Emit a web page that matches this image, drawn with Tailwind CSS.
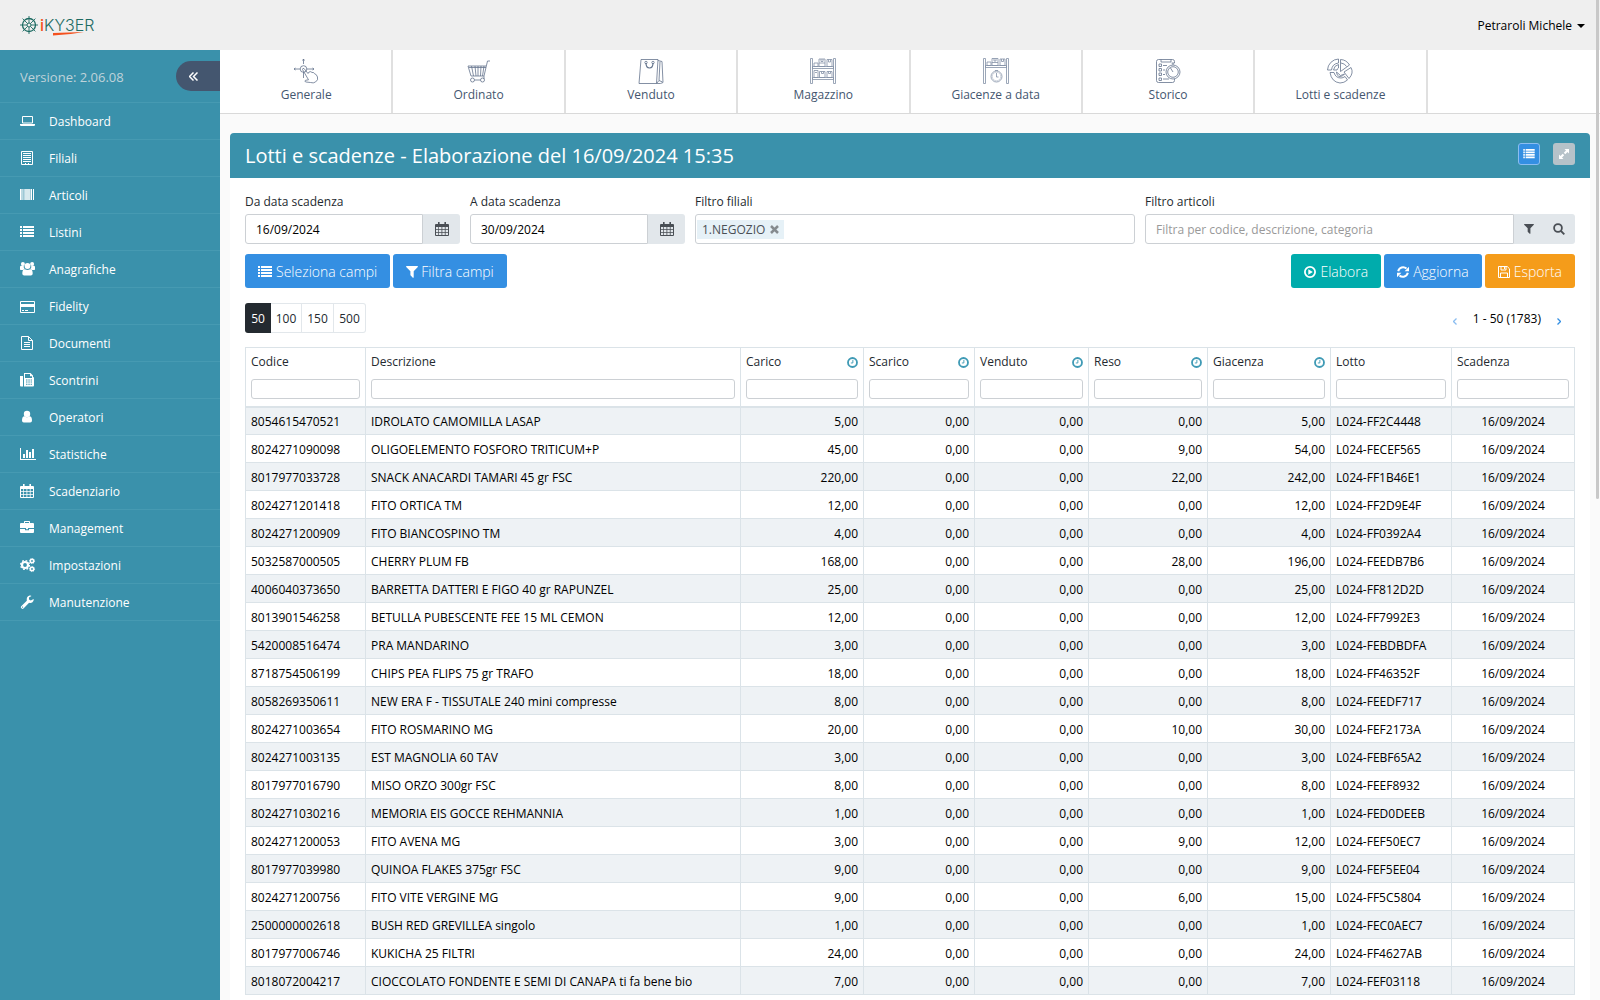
<!DOCTYPE html>
<html lang="it">
<head>
<meta charset="utf-8">
<meta name="viewport" content="width=device-width, initial-scale=1">
<title>Lotti e scadenze</title>
<script src="https://cdn.jsdelivr.net/npm/@tailwindcss/browser@4"></script>
</head>
<body class="font-['Open_Sans','Noto_Sans',sans-serif] text-xs text-black bg-[#fafafa]">

<svg class="hidden" aria-hidden="true">
  <symbol id="i-list" viewBox="0 0 14 12"><path fill="currentColor" d="M0 0h2v2H0zM3 0h11v2H3zM0 3h2v2H0zM3 3h11v2H3zM0 6h2v2H0zM3 6h11v2H3zM0 9h2v2H0zM3 9h11v2H3z"/></symbol>
  <symbol id="i-filter" viewBox="0 0 12 12"><path fill="currentColor" d="M.6 0h10.8c.5 0 .7.6.4.9L7.700 5.200v6.100c0 .5-.5.7-.9.4L4.700 9.600a.8.8 0 0 1-.3-.5V5.200L.2.9C-.1.6.1 0 .6 0z"/></symbol>
  <symbol id="i-calendar" viewBox="0 0 14 14"><path fill="currentColor" fill-rule="evenodd" d="M3 0h1.600v2h4.800V0H11v2h2a1 1 0 0 1 1 1v10a1 1 0 0 1-1 1H1a1 1 0 0 1-1-1V3a1 1 0 0 1 1-1h2zM1 5v2h2.300V5zm3 0v2h2.500V5zm3.300 0v2h2.500V5zm3.300 0v2H13V5zM1 7.700v2.200h2.300V7.700zm3 0v2.200h2.500V7.700zm3.300 0v2.200h2.500V7.700zm3.300 0v2.200H13V7.700zM1 10.700V13h2.300v-2.300zm3 0V13h2.500v-2.300zm3.300 0V13h2.500v-2.300zm3.300 0V13H13v-2.300z"/></symbol>
  <symbol id="i-clock" viewBox="0 0 12 12"><circle cx="6" cy="6" r="4.900" fill="none" stroke="currentColor" stroke-width="2"/><path d="M6.400 3.200v3.300H4.200" fill="none" stroke="currentColor"/></symbol>
</svg>

<div class="relative flex h-screen flex-col overflow-hidden">
  <header class="flex h-[50px] shrink-0 items-center justify-between bg-[#efefef] pr-[15px] pl-5">
    <a href="#" aria-label="iKyber" class="relative flex items-center gap-0.5 text-[#1d6b62]">
      <svg class="size-[18px]" viewBox="0 0 18 18" fill="none" stroke="currentColor"><circle cx="9" cy="9" r="6.500" stroke-width="1.300"/><circle cx="9" cy="9" r="2" stroke-width="1"/><path stroke-width=".9" d="M9 0v7M9 11v7M0 9h7M11 9h7M2.600 2.600l5 5M10.400 10.400l5 5M15.400 2.600l-5 5M7.600 10.400l-5 5"/></svg>
      <span class="font-['Inter',sans-serif] text-base leading-5 font-light"><span class="font-medium text-[#f4511e]">i</span>KY3ER</span>
      <svg class="absolute top-[17px] left-8 h-1 w-8" viewBox="0 0 32 4" preserveAspectRatio="none"><path d="M1 1L32 0Q16 3 1 3.500z" fill="#f4511e"/></svg>
    </a>
    <button class="flex items-center gap-[5px] pt-px">Petraroli Michele
      <svg class="h-1 w-2" viewBox="0 0 8 4"><path d="M0 0h8L4 4z"/></svg>
    </button>
  </header>

  <div class="flex min-h-0 flex-1">
    <aside class="w-[220px] shrink-0 bg-[#3a91ab] text-white">
      <div class="flex h-[53px] items-center justify-between border-b border-[#469ab2] pl-5">
        <span class="pt-[3px] text-[13px] text-[#bfd3da]">Versione: 2.06.08</span>
        <button aria-label="Comprimi menu" class="flex h-[30px] w-11 items-center rounded-l-full bg-[#44566f] pl-[13px]">
          <svg class="size-[9px]" viewBox="0 0 9 9" fill="none" stroke="currentColor" stroke-width="1.500"><path d="M4.500.5l-4 4 4 4M8.500.5l-4 4 4 4"/></svg>
        </button>
      </div>
      <nav>
        <a href="#" class="flex h-[37px] items-center gap-[13px] border-b border-[#469ab2] pt-px pl-5"><svg class="size-4" viewBox="0 0 16 16"><path fill="none" stroke="currentColor" d="M2.500 2.500h10v6.500h-10z"/><path fill="currentColor" d="M0 10h15v1.200l-.8.8H.8l-.8-.8z"/></svg>Dashboard</a>
        <a href="#" class="flex h-[37px] items-center gap-[13px] border-b border-[#469ab2] pt-px pl-5"><svg class="size-4" viewBox="0 0 16 16" fill="none" stroke="currentColor"><path d="M1.500.500h11v13h-11z"/><path d="M3 2.500h8M3 4.500h8M3 6.500h8M3 8.500h8M3 10.500h8"/><path d="M5 12.500h1M8 12.500h1"/></svg>Filiali</a>
        <a href="#" class="flex h-[37px] items-center gap-[13px] border-b border-[#469ab2] pt-px pl-5"><svg class="size-4" viewBox="0 0 16 16" fill="currentColor"><path opacity=".65" d="M0 1h3v11H0zM4 1h1v11H4z"/><path opacity=".8" d="M5 1h5v11H5z"/><path opacity=".5" d="M3 1h1v11H3zM10 1h1v11h-1z"/><path d="M0 1h1v11H0zM11 1h1v11h-1zM13 1h1v11h-1z"/></svg>Articoli</a>
        <a href="#" class="flex h-[37px] items-center gap-[13px] border-b border-[#469ab2] pt-px pl-5"><svg class="size-4" viewBox="0 0 16 16"><use href="#i-list" x="0" y="1" width="14" height="12"/></svg>Listini</a>
        <a href="#" class="flex h-[37px] items-center gap-[13px] border-b border-[#469ab2] pt-px pl-5"><svg class="size-4" viewBox="0 1 16 16" fill="currentColor"><circle cx="2.900" cy="3" r="2"/><circle cx="12.100" cy="3" r="2"/><circle cx="7.500" cy="5" r="2.900"/><path d="M0 8.500V6q0-1.300 1.300-1.300h2.500q-.5 2 .8 3.300-1 .1-1.600.9H.6zM15 8.500V6q0-1.300-1.300-1.300h-2.500q.5 2-.8 3.300 1 .1 1.600.9h2.400zM2.300 12.500q0-4.300 2.500-4.300 2.700 1.600 5.400 0 2.500 0 2.500 4.300 0 2-1.900 2H4.200q-1.900 0-1.900-2z"/></svg>Anagrafiche</a>
        <a href="#" class="flex h-[37px] items-center gap-[13px] border-b border-[#469ab2] pt-px pl-5"><svg class="size-4" viewBox="0 0 16 16"><path fill="none" stroke="currentColor" d="M.5 2.500h14v11H.5z"/><path fill="currentColor" d="M0 5h15v3H0zM2 11h2v1H2zM5 11h3v1H5z"/></svg>Fidelity</a>
        <a href="#" class="flex h-[37px] items-center gap-[13px] border-b border-[#469ab2] pt-px pl-5"><svg class="size-4" viewBox="0 0 16 16" fill="none" stroke="currentColor"><path d="M1.500.500h7l4 4v9h-11zM8.500.500v4h4M4 6.500h6M4 8.500h6M4 10.500h6"/></svg>Documenti</a>
        <a href="#" class="flex h-[37px] items-center gap-[13px] border-b border-[#469ab2] pt-px pl-5"><svg class="size-4" viewBox="0 1 16 16" fill="currentColor"><path d="M0 4h3v10.500H1a1 1 0 0 1-1-1z"/><path fill-rule="evenodd" d="M4 1h6.500L13 3.500V5q1 0 1 1v7.500q0 1-1 1H4zM5 2v4h7V4.200h-2V2zM6 7.500v1h1.500v-1zm2.300 0v1h1.500v-1zm2.300 0v1H12v-1zM6 9.600v1h1.500v-1zm2.300 0v1h1.500v-1zm2.300 0v1H12v-1zM6 11.700v1h1.500v-1zm2.300 0v1h1.500v-1zm2.300 0v1H12v-1z"/></svg>Scontrini</a>
        <a href="#" class="flex h-[37px] items-center gap-[13px] border-b border-[#469ab2] pt-px pl-5"><svg class="size-4" viewBox="0 0 16 16" fill="currentColor"><circle cx="7" cy="4" r="3.200"/><path d="M2 10.500q0-4.300 2.600-4.300 2.400 2 4.800 0 2.600 0 2.600 4.300 0 2-1.800 2H3.800q-1.800 0-1.800-2z"/></svg>Operatori</a>
        <a href="#" class="flex h-[37px] items-center gap-[13px] border-b border-[#469ab2] pt-px pl-5"><svg class="size-4" viewBox="0 0 16 16" fill="currentColor"><path d="M0 1h1v11h15v1H0zM3 7h2v4H3zM6 3h2v8H6zM9 5h2v6H9zM12 2h2v9h-2z"/></svg>Statistiche</a>
        <a href="#" class="flex h-[37px] items-center gap-[13px] border-b border-[#469ab2] pt-px pl-5"><svg class="size-4" viewBox="0 0 16 16"><use href="#i-calendar" width="14" height="14"/></svg>Scadenziario</a>
        <a href="#" class="flex h-[37px] items-center gap-[13px] border-b border-[#469ab2] pt-px pl-5"><svg class="size-4" viewBox="0 1 16 16" fill="currentColor"><path fill-rule="evenodd" d="M4 3V1.700q0-.7.700-.7h4.600q.7 0 .7.700V3h3q1 0 1 1v4H0V4q0-1 1-1zm1 0h4V2H5z"/><path d="M0 9h5v1.300h4V9h5v3q0 1-1 1H1q-1 0-1-1zM6 8h2v1.300H6z"/></svg>Management</a>
        <a href="#" class="flex h-[37px] items-center gap-[13px] border-b border-[#469ab2] pt-px pl-5"><svg class="size-4" viewBox="0 1 16 16" fill="none" stroke="currentColor"><circle cx="5" cy="8" r="3" stroke-width="2.200"/><circle cx="5" cy="8" r="4.500" stroke-width="1.200" stroke-dasharray="1.770 1.770"/><circle cx="12" cy="4" r="1.700" stroke-width="1.600"/><circle cx="12" cy="4" r="2.600" stroke-width=".8" stroke-dasharray="1.020 1.020"/><circle cx="12" cy="12" r="1.700" stroke-width="1.600"/><circle cx="12" cy="12" r="2.600" stroke-width=".8" stroke-dasharray="1.020 1.020"/></svg>Impostazioni</a>
        <a href="#" class="flex h-[37px] items-center gap-[13px] border-b border-[#469ab2] pt-px pl-5"><svg class="size-4" viewBox="0 1 16 16" fill="currentColor"><path fill-rule="evenodd" d="M6.800 6.800L1.200 12.300q-.9.900 0 1.700l.5.500q.9.800 1.800-.1l5.600-5.600q2.900.9 4.300-1.800.5-1.200.2-1.900L10.800 6.600 9 5.600v-2L11.500 2q-.3-.7-2-.4-3.300 1-2.700 5.200zM2.600 12.500a.6.600 0 1 1-.1 1.200.6.600 0 0 1 .1-1.200z"/></svg>Manutenzione</a>
      </nav>
    </aside>

    <main class="min-w-0 flex-1">
      <nav class="flex h-16 border-b border-[#d9d9d9] bg-white pl-px text-[#44566f]">
        <a href="#" class="flex w-1/8 flex-col items-center gap-[3px] border-r-2 border-[#e0e0e0] pt-2"><svg class="size-[26px] text-[#64748d]" viewBox="0 0 26 26" fill="none" stroke="currentColor" stroke-width=".8"><path d="M10.500 1v5M10.500 14v6M1 11h6M14 11h7M9.500 2.500l1-1.500 1 1.500M2.500 10L1 11l1.500 1M19.500 10l1.500 1-1.500 1"/><circle cx="10.500" cy="11" r="3.300"/><path d="M9.500 11.500q0-1.500 1.500-1l4 5 1-1.500q2-1 3 .5 2-.5 2.500 1.200 2 .3 3 3.300 1 3-2 5-2 1.500-5 .5l-4.500-.5q-2-.5-.5-1.700l3-.5z"/></svg><span>Generale</span></a>
        <a href="#" class="flex w-1/8 flex-col items-center gap-[3px] border-r-2 border-[#e0e0e0] pt-2"><svg class="size-[26px] text-[#64748d]" viewBox="0 0 26 26" fill="none" stroke="currentColor" stroke-width=".8"><path d="M24 3h-2.500l-3.500 15H5l-3-10h18M3 9.500h17M5.500 8l2 10M9 8l1 10M12 8v10M15 8l-.5 10M18 8l-1.500 10M8.500 22h6M18 18v3"/><circle cx="6.500" cy="22" r="2"/><circle cx="16.500" cy="22" r="2"/></svg><span>Ordinato</span></a>
        <a href="#" class="flex w-1/8 flex-col items-center gap-[3px] border-r-2 border-[#e0e0e0] pt-2"><svg class="size-[26px] text-[#64748d]" viewBox="0 0 26 26" fill="none" stroke="currentColor" stroke-width=".8"><path d="M3 1.500h17l-1.500 24H1zM20 2.500l4 1 1 21-2.500 1h-4M22 3.500l-1 19-2.500 3M21 22.500l3.500 1.500"/><circle cx="8" cy="4.500" r="1.200"/><circle cx="15" cy="4.500" r="1.200"/><path d="M8 5q0 5 3.500 5T15 5" stroke-width="1.200"/></svg><span>Venduto</span></a>
        <a href="#" class="flex w-1/8 flex-col items-center gap-[3px] border-r-2 border-[#e0e0e0] pt-2"><svg class="size-[26px] text-[#8391a6]" viewBox="0 0 26 26" fill="none" stroke="currentColor" stroke-width=".8"><path d="M.5.500h2v25h-2zM23.500.500h2v25h-2zM2.500 8.500h21v2h-21zM2.500 19.500h21v2h-21zM4 5h4v3.500H4zM9 1h6v7.500H9zM11 1v2.500h2V1M17 1.500h5v7h-5zM18.500 1.500V4h2V1.500M4 12.500h4v7H4zM9.500 13.500h5.500v6H9.500zM11.500 13.500v2h2v-2M17 13.500h5v6h-5zM18.500 13.500v2h2v-2M5 14.500h2M9 5h6"/></svg><span>Magazzino</span></a>
        <a href="#" class="flex w-1/8 flex-col items-center gap-[3px] border-r-2 border-[#e0e0e0] pt-2"><svg class="size-[26px] text-[#8391a6]" viewBox="0 0 26 26" fill="none" stroke="currentColor" stroke-width=".8"><path d="M.5.500h2v25h-2zM23.500.500h2v25h-2zM2.500 7.500h21v2h-21zM4 4h4v3.500H4zM9 .500h6v7H9zM11 .500V3h2V.500M17 1h5v6.500h-5zM18.500 1v2.500h2V1M9 4.500h6M13.500 15v4h2M12 12.500h3"/><circle cx="13.500" cy="18.500" r="5.500"/><circle cx="13.500" cy="18.500" r="4.300" stroke-width=".4"/></svg><span>Giacenze a data</span></a>
        <a href="#" class="flex w-1/8 flex-col items-center gap-[3px] border-r-2 border-[#e0e0e0] pt-2"><svg class="size-[26px] text-[#64748d]" viewBox="0 0 26 26" fill="none" stroke="currentColor" stroke-width=".8"><path d="M19.500 5V3.500q0-2-2-2h-14q-2 0-2 2v19q0 2 2 2h14q2 0 2-2V21M6 1.500V4h10V1.500M4 6h2.500v2.500H4zM4 10.500h2.500V13H4zM4 15h2.500v2.500H4zM4 20h2.500v2.500H4zM8 7.500h4M8 12h2M8 16.500h2M8 21h6M18 7V5M16.500 5h3M18 14l-2.500-4"/><circle cx="18" cy="14" r="7"/><circle cx="18" cy="14" r="5.300"/></svg><span>Storico</span></a>
        <a href="#" class="flex w-1/8 flex-col items-center gap-[3px] border-r-2 border-[#e0e0e0] pt-2"><svg class="size-[26px] text-[#64748d]" viewBox="0 0 26 26" fill="none" stroke="currentColor" stroke-width=".8"><path d="M11.500 1A11.500 11.500 0 0 0 .5 12h4a8 8 0 0 1 7-7zM13.500 1.500v12l9-6.500a11 11 0 0 0-9-5.500zM11.500 6.500a6.500 6.500 0 0 0-5 5.500h3.500q.3-1.500 1.500-2zM24 9.500l-7 4.500 5 6.500q5-5.500 2-11zM3 14.500h4q1.500 5.500 7 5.500 2 0 4-1.500l2.500 3.500Q17 25 13 25 4.500 24 3 14.500zM9.500 14l4 3.500 4-1.500q-1.500 2.500-4.500 2.500T9.500 14zM14 5q4 .5 5.500 3.500"/></svg><span>Lotti e scadenze</span></a>
      </nav>

      <section class="mx-2.5 mt-[19px] bg-white">
        <header class="flex h-[45px] items-center justify-between rounded-t bg-[#3a91ab] px-[15px] text-white">
          <h1 class="text-xl">Lotti e scadenze - Elaborazione del 16/09/2024 15:35</h1>
          <div class="flex gap-[13px] pb-[3px]">
            <button aria-label="Elenco" class="grid size-[22px] place-items-center rounded-[3px] border border-[#8bbdf0] bg-[#348fe2]"><svg class="h-2.5 w-3" viewBox="0 0 14 12"><use href="#i-list" width="14" height="12"/></svg></button>
            <button aria-label="Espandi" class="grid size-[22px] place-items-center rounded-[3px] bg-[#b6c2c9]"><svg class="size-2.5" viewBox="0 0 10 10" fill="currentColor"><path d="M5.500 0H10v4.500L8.500 3 6.300 5.200 4.800 3.700 7 1.500zM0 5.500L1.500 7l2.200-2.200 1.500 1.500L3 8.500 4.500 10H0z"/></svg></button>
          </div>
        </header>

        <div class="px-[15px] pt-[15px] pb-5">
          <form class="grid grid-cols-[215fr_215fr_440fr_430fr] gap-2.5 text-[#242a30]">
            <div>
              <label for="da" class="block h-[21px] leading-[18px]">Da data scadenza</label>
              <div class="flex h-[30px]">
                <input id="da" value="16/09/2024" class="min-w-0 flex-1 rounded-l-[3px] border border-[#ccd0d4] px-2.5 pt-0.5 text-black">
                <button type="button" aria-label="Apri calendario" class="grid w-[37px] place-items-center rounded-r-[3px] bg-[#e2e7eb] text-[#4a4f55]"><svg class="size-3.5"><use href="#i-calendar" width="14" height="14"/></svg></button>
              </div>
            </div>
            <div>
              <label for="a" class="block h-[21px] leading-[18px]">A data scadenza</label>
              <div class="flex h-[30px]">
                <input id="a" value="30/09/2024" class="min-w-0 flex-1 rounded-l-[3px] border border-[#ccd0d4] px-2.5 pt-0.5 text-black">
                <button type="button" aria-label="Apri calendario" class="grid w-[37px] place-items-center rounded-r-[3px] bg-[#e2e7eb] text-[#4a4f55]"><svg class="size-3.5"><use href="#i-calendar" width="14" height="14"/></svg></button>
              </div>
            </div>
            <div>
              <label for="filiali" class="block h-[21px] leading-[18px]">Filtro filiali</label>
              <div class="flex h-[30px] items-center rounded-[3px] border border-[#ccd0d4] pt-px pl-px">
                <span class="flex h-[19px] items-center gap-[5px] bg-[#e6f1f7] px-[5px] text-[#4a4f55]">1.NEGOZIO
                  <button type="button" aria-label="Rimuovi 1.NEGOZIO"><svg class="size-[9px]" viewBox="0 0 9 9" stroke="#868b8f" stroke-width="2.500"><path d="M1 1l7 7M8 1L1 8"/></svg></button>
                </span>
                <input id="filiali" class="min-w-0 flex-1 outline-none">
              </div>
            </div>
            <div>
              <label for="articoli" class="block h-[21px] leading-[18px]">Filtro articoli</label>
              <div class="flex h-[30px]">
                <input id="articoli" placeholder="Filtra per codice, descrizione, categoria" class="min-w-0 flex-1 rounded-l-[3px] border border-[#ccd0d4] px-2.5 pt-0.5 placeholder:text-[#999]">
                <div class="flex w-[61px] items-center justify-around rounded-r-[3px] bg-[#e2e7eb] text-[#4a4f55]">
                  <button type="button" aria-label="Filtra"><svg class="size-2.5"><use href="#i-filter" width="10" height="10"/></svg></button>
                  <button type="button" aria-label="Cerca"><svg class="size-3" viewBox="0 0 12 12" fill="none" stroke="currentColor" stroke-width="1.800"><circle cx="5" cy="5" r="3.900"/><path d="M8 8l3.300 3.300"/></svg></button>
                </div>
              </div>
            </div>
          </form>

          <div class="mt-2.5 flex justify-between text-sm font-light text-white">
            <div class="flex gap-[3px]">
              <button class="flex h-[34px] items-center gap-1 rounded-[3px] bg-[#348fe2] px-[13px] pt-0.5"><svg class="h-3 w-3.5"><use href="#i-list" width="14" height="12"/></svg>Seleziona campi</button>
              <button class="flex h-[34px] items-center gap-[3px] rounded-[3px] bg-[#348fe2] px-[13px] pt-0.5"><svg class="size-3"><use href="#i-filter" width="12" height="12"/></svg>Filtra campi</button>
            </div>
            <div class="flex gap-[3px]">
              <button class="flex h-[34px] items-center gap-1 rounded-[3px] bg-[#00acac] px-[13px] pt-0.5"><svg class="size-3" viewBox="0 0 12 12"><circle cx="6" cy="6" r="5.100" fill="none" stroke="currentColor" stroke-width="1.800"/><path d="M4.300 3.300L8.800 6 4.300 8.700z" fill="currentColor"/></svg>Elabora</button>
              <button class="flex h-[34px] items-center gap-1 rounded-[3px] bg-[#348fe2] px-[13px] pt-0.5"><svg class="size-3" viewBox="0 0 12 12"><path d="M1.200 5.200A5 5 0 0 1 9.500 2.600M10.800 6.800A5 5 0 0 1 2.500 9.400" fill="none" stroke="currentColor" stroke-width="2"/><path d="M12 .8v4.400H7.600zM0 11.200V6.800h4.400z" fill="currentColor"/></svg>Aggiorna</button>
              <button class="flex h-[34px] items-center gap-1 rounded-[3px] bg-[#f59c1a] px-[13px] pt-0.5"><svg class="size-3" viewBox="0 0 12 12" fill="none" stroke="currentColor"><path d="M.5.500h8.700l2.300 2.300v8.700H.5zM3 .500v3.500h5V.500M6.500 1v2M2.500 11.500V7h7v4.500"/></svg>Esporta</button>
            </div>
          </div>

          <div class="mt-[15px] flex items-center justify-between">
            <div class="flex h-[30px] text-[#242a30]">
              <button class="w-[26px] rounded-l-[3px] bg-[#242a30] pt-0.5 text-white">50</button>
              <button class="w-[31px] border-y border-r border-[#e2e7eb] pt-0.5">100</button>
              <button class="w-8 border-y border-r border-[#e2e7eb] pt-0.5">150</button>
              <button class="w-8 rounded-r-[3px] border-y border-r border-[#e2e7eb] pt-0.5">500</button>
            </div>
            <div class="flex items-center gap-4 pt-0.5 pr-3.5">
              <button aria-label="Pagina precedente" class="mt-1 text-[#8bbdf0]"><svg class="h-[7px] w-1" viewBox="0 0 4 7" fill="none" stroke="currentColor" stroke-width="1.300"><path d="M3.500.500l-3 3 3 3"/></svg></button>
              <span>1 - 50 (1783)</span>
              <button aria-label="Pagina successiva" class="mt-1 text-[#348fe2]"><svg class="h-[7px] w-1" viewBox="0 0 4 7" fill="none" stroke="currentColor" stroke-width="1.300"><path d="M.5.500l3 3-3 3"/></svg></button>
            </div>
          </div>

          <table class="mt-3.5 w-full table-fixed border-collapse border border-[#dbe3e8]">
            <colgroup>
              <col class="w-[120px]"><col><col class="w-[123px]"><col class="w-[111px]"><col class="w-[114px]"><col class="w-[119px]"><col class="w-[123px]"><col class="w-[121px]"><col class="w-[123px]">
            </colgroup>
            <thead class="text-left text-[#242a30]"><tr id="head"></tr></thead>
            <tbody id="rows"></tbody>
          </table>
        </div>
      </section>
    </main>
  </div>

  <div class="absolute top-0 right-px h-[499px] w-[3px] rounded-b bg-[#c8c8c8]"></div>
</div>

<script>
const columns = ['Codice', 'Descrizione', 'Carico', 'Scarico', 'Venduto', 'Reso', 'Giacenza', 'Lotto', 'Scadenza'];
const numeric = ['Carico', 'Scarico', 'Venduto', 'Reso', 'Giacenza'];
// codice | descrizione | carico | reso | giacenza | lotto
const data = `8054615470521|IDROLATO CAMOMILLA LASAP|5|0|5|FF2C4448
8024271090098|OLIGOELEMENTO FOSFORO TRITICUM+P|45|9|54|FECEF565
8017977033728|SNACK ANACARDI TAMARI 45 gr FSC|220|22|242|FF1B46E1
8024271201418|FITO ORTICA TM|12|0|12|FF2D9E4F
8024271200909|FITO BIANCOSPINO TM|4|0|4|FF0392A4
5032587000505|CHERRY PLUM FB|168|28|196|FEEDB7B6
4006040373650|BARRETTA DATTERI E FIGO 40 gr RAPUNZEL|25|0|25|FF812D2D
8013901546258|BETULLA PUBESCENTE FEE 15 ML CEMON|12|0|12|FF7992E3
5420008516474|PRA MANDARINO|3|0|3|FEBDBDFA
8718754506199|CHIPS PEA FLIPS 75 gr TRAFO|18|0|18|FF46352F
8058269350611|NEW ERA F - TISSUTALE 240 mini compresse|8|0|8|FEEDF717
8024271003654|FITO ROSMARINO MG|20|10|30|FEF2173A
8024271003135|EST MAGNOLIA 60 TAV|3|0|3|FEBF65A2
8017977016790|MISO ORZO 300gr FSC|8|0|8|FEEF8932
8024271030216|MEMORIA EIS GOCCE REHMANNIA|1|0|1|FED0DEEB
8024271200053|FITO AVENA MG|3|9|12|FEF50EC7
8017977039980|QUINOA FLAKES 375gr FSC|9|0|9|FEF5EE04
8024271200756|FITO VITE VERGINE MG|9|6|15|FF5C5804
2500000002618|BUSH RED GREVILLEA singolo|1|0|1|FEC0AEC7
8017977006746|KUKICHA 25 FILTRI|24|0|24|FF4627AB
8018072004217|CIOCCOLATO FONDENTE E SEMI DI CANAPA ti fa bene bio|7|0|7|FEF03118`.split('\n').map(r => r.split('|'));

document.getElementById('head').innerHTML = columns.map(c => `
  <th scope="col" class="h-[59px] border border-[#dbe3e8] border-b-2 px-[5px] align-top font-normal">
    <div class="flex h-[31px] items-center justify-between pb-[3px]">
      <label for="f-${c}">${c}</label>
      ${numeric.includes(c) ? '<svg class="size-[11px] text-[#3f9ab5]"><use href="#i-clock" width="11" height="11"/></svg>' : ''}
    </div>
    <input id="f-${c}" class="block h-5 w-full rounded-[3px] border border-[#ccd0d4] bg-white px-1">
  </th>`).join('');

document.getElementById('rows').innerHTML = data.map(([code, name, load, back, stock, lot]) => `
  <tr class="h-7 odd:bg-[#eef2f5]">
    <td class="border border-[#dbe3e8] px-[5px] pt-0.5">${code}</td>
    <td class="truncate border border-[#dbe3e8] px-[5px] pt-0.5">${name}</td>
    ${[load, 0, 0, back, stock].map(n => `<td class="border border-[#dbe3e8] px-[5px] pt-0.5 text-right">${n},00</td>`).join('')}
    <td class="border border-[#dbe3e8] px-[5px] pt-0.5">L024-${lot}</td>
    <td class="border border-[#dbe3e8] px-[5px] pt-0.5 text-center">16/09/2024</td>
  </tr>`).join('');
</script>
</body>
</html>
